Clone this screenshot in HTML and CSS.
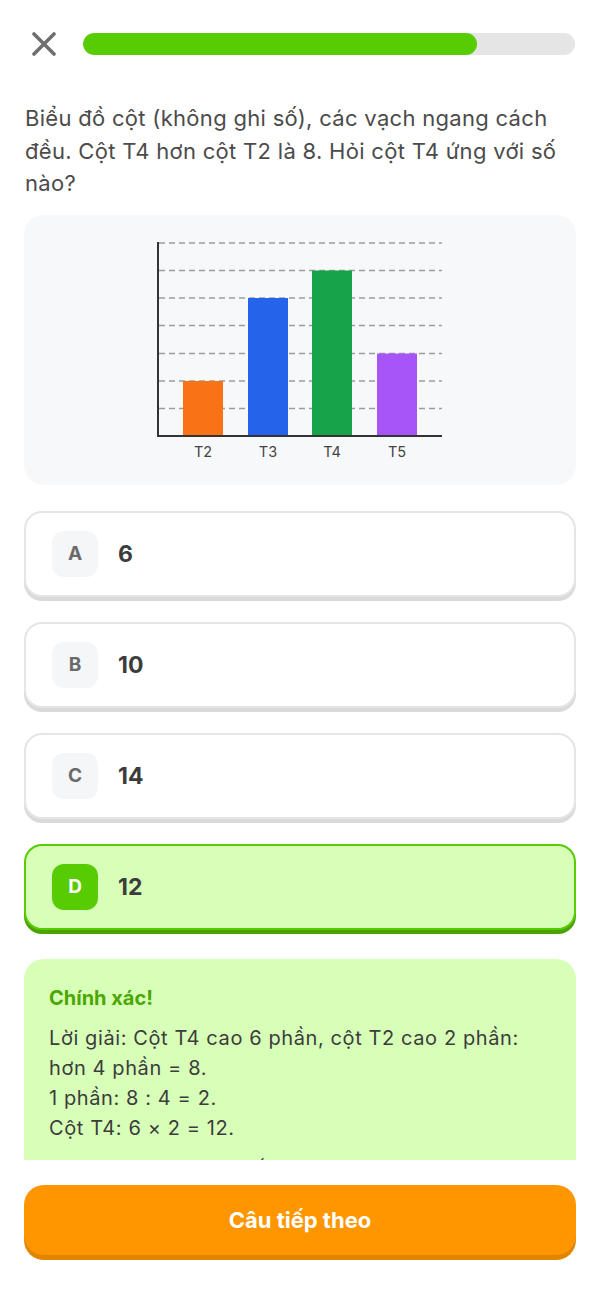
FILE: index.html
```html
<!DOCTYPE html>
<html lang="vi">
<head>
    <meta charset="UTF-8">
    <meta name="viewport" content="width=device-width, initial-scale=1.0">
    <title>Câu hỏi</title>
    <link rel="stylesheet" href="styles.css">
</head>
<body>
    <div class="screen">
        <div class="top-bar">
            <svg class="close-icon" width="24" height="24" viewBox="0 0 24 24">
                <path d="M2 2 L22 22 M22 2 L2 22" stroke="#6f6f6f" stroke-width="3.6" stroke-linecap="round"/>
            </svg>
            <div class="progress">
                <div class="progress-fill" style="width: 80%"></div>
            </div>
        </div>

        <div class="content">
            <p class="question">Biểu đồ cột (không ghi số), các vạch ngang cách đều. Cột T4 hơn cột T2 là 8. Hỏi cột T4 ứng với số nào?</p>

            <div class="chart-card">
                <svg class="chart" width="300" height="230" viewBox="0 0 300 230">
                    <g stroke="#9c9c9c" stroke-width="1.4" stroke-dasharray="6 4">
                        <line x1="9" y1="8" x2="292" y2="8"/>
                        <line x1="9" y1="35.5" x2="292" y2="35.5"/>
                        <line x1="9" y1="63" x2="292" y2="63"/>
                        <line x1="9" y1="90.5" x2="292" y2="90.5"/>
                        <line x1="9" y1="118.5" x2="292" y2="118.5"/>
                        <line x1="9" y1="146" x2="292" y2="146"/>
                        <line x1="9" y1="173.5" x2="292" y2="173.5"/>
                    </g>
                    <rect x="33" y="146" width="40" height="55" fill="#f97316"/>
                    <rect x="98" y="63" width="40" height="138" fill="#2563eb"/>
                    <rect x="162" y="35.5" width="40" height="165.5" fill="#16a34a"/>
                    <rect x="227" y="118.5" width="40" height="82.5" fill="#a855f7"/>
                    <path d="M8 7 L8 201 L292 201" fill="none" stroke="#333" stroke-width="2"/>
                    <g class="chart-label" text-anchor="middle">
                        <text x="53" y="222">T2</text>
                        <text x="118" y="222">T3</text>
                        <text x="182" y="222">T4</text>
                        <text x="247" y="222">T5</text>
                    </g>
                </svg>
            </div>

            <div class="options">
                <div class="option">
                    <span class="badge">A</span>
                    <span class="value">6</span>
                </div>
                <div class="option">
                    <span class="badge">B</span>
                    <span class="value">10</span>
                </div>
                <div class="option">
                    <span class="badge">C</span>
                    <span class="value">14</span>
                </div>
                <div class="option correct">
                    <span class="badge">D</span>
                    <span class="value">12</span>
                </div>
            </div>

            <div class="explain">
                <div class="explain-title">Chính xác!</div>
                <p>Lời giải: Cột T4 cao 6 phần, cột T2 cao 2 phần: hơn 4 phần = 8.</p>
                <p>1 phần: 8 : 4 = 2.</p>
                <p>Cột T4: 6 × 2 = 12.</p>
                <p class="answer-line">Vậy cột T4 ứng với số 12.</p>
            </div>
        </div>

        <div class="footer">
            <button class="next-btn">Câu tiếp theo</button>
        </div>
    </div>
</body>
</html>
```

FILE: styles.css
```css
body {
    margin: 0;
    padding: 0;
    background-color: #fff;
    font-family: Inter, "Noto Sans", "Liberation Sans", sans-serif;
    color: #3c3c3c;
}
.screen {
    height: 100vh;
    display: flex;
    flex-direction: column;
}
.top-bar {
    display: flex;
    align-items: center;
    gap: 27px;
    padding: 32px 25px 0 32px;
}
.close-icon {
    display: block;
    flex-shrink: 0;
}
.progress {
    flex: 1;
    height: 22px;
    background-color: #e5e5e5;
    border-radius: 11px;
    overflow: hidden;
}
.progress-fill {
    height: 100%;
    background-color: #58cc02;
    border-radius: 11px;
}
.content {
    flex: 1;
    overflow: hidden;
    padding: 0 24px;
}
.question {
    margin: 46px 0 15px 1px;
    font-size: 22px;
    letter-spacing: 0.3px;
    line-height: 32.5px;
    color: #4b4b4b;
}
.chart-card {
    background-color: #f7f8fa;
    border-radius: 20px;
    padding: 20px 0;
    display: flex;
    justify-content: center;
}
.chart {
    display: block;
}
.chart-label {
    font-family: Inter, "Liberation Sans", sans-serif;
    font-size: 14.5px;
    fill: #444;
}
.options {
    margin-top: 26px;
    display: flex;
    flex-direction: column;
    gap: 25px;
}
.option {
    display: flex;
    align-items: center;
    gap: 20px;
    padding: 18px 26px;
    border: 2px solid #e5e5e5;
    border-radius: 18px;
    box-shadow: 0 4px 0 #dadada;
    background-color: #fff;
}
.badge {
    width: 46px;
    height: 46px;
    border-radius: 12px;
    background-color: #f4f6f8;
    display: flex;
    align-items: center;
    justify-content: center;
    font-size: 19px;
    font-weight: 700;
    color: #6a6a6a;
}
.value {
    font-size: 23px;
    font-weight: 700;
    color: #3c3c3c;
}
.option.correct {
    background-color: #d7ffb8;
    border-color: #58cc02;
    box-shadow: 0 4px 0 #4aa302;
}
.option.correct .badge {
    background-color: #58cc02;
    color: #fff;
}
.explain {
    margin-top: 29px;
    background-color: #d7ffb8;
    border-radius: 20px;
    padding: 25px 25px 20px;
}
.explain-title {
    font-size: 20px;
    line-height: 28px;
    font-weight: 700;
    color: #4ca702;
    margin-bottom: 11px;
}
.explain p {
    margin: 0;
    font-size: 20px;
    letter-spacing: 0.6px;
    line-height: 30.3px;
    color: #3c3c3c;
}
.explain .answer-line {
    margin-top: 11px;
}
.footer {
    flex-shrink: 0;
    height: 139px;
    box-sizing: border-box;
    padding: 25px 24px 0;
}
.next-btn {
    width: 100%;
    height: 70px;
    border: none;
    border-radius: 20px;
    background-color: #ff9600;
    box-shadow: 0 5px 0 #df8500;
    color: #fff;
    font-family: Inter, "Liberation Sans", sans-serif;
    font-size: 22px;
    font-weight: 700;
    cursor: pointer;
}
```
